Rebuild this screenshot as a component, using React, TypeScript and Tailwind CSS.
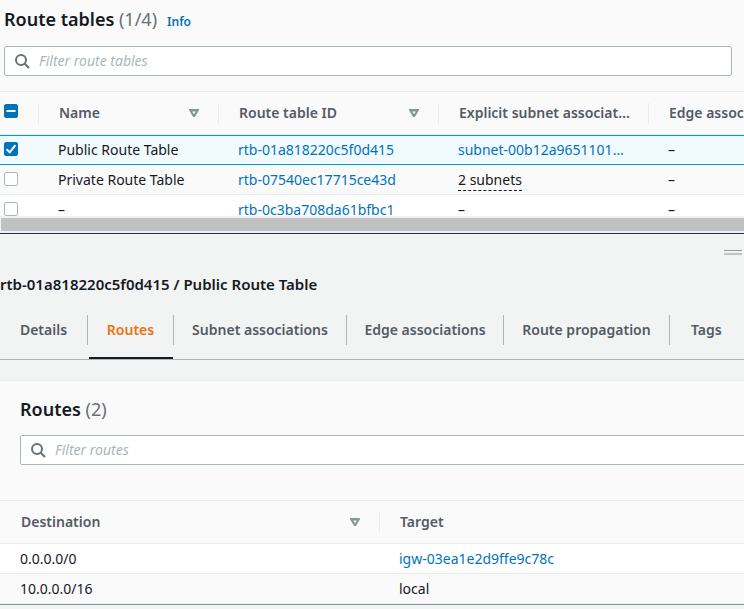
import { useEffect, useRef, useState, type ReactNode } from "react";

function SearchIcon() {
  return (
    <svg className="size-4 shrink-0 text-[#687078]" viewBox="0 0 16 16" fill="none" stroke="currentColor" strokeWidth="2" aria-hidden="true">
      <circle cx="7" cy="7" r="5" />
      <path d="M15 15l-4.5-4.5" />
    </svg>
  );
}

function SortIcon() {
  return (
    <svg className="h-2 w-2.5 shrink-0 text-[#879596]" viewBox="0 0 10 8" fill="currentColor" aria-hidden="true">
      <path fillRule="evenodd" d="M0 0h10v1.2L5.8 8H4.2L0 1.2zM3.2 2.4L5 5.3l1.8-2.9z" />
    </svg>
  );
}

function SearchBox({ label }: { label: string }) {
  return (
    <label className="flex h-[30px] items-center gap-[9px] rounded-xs border border-[#aab7b8] bg-white px-[9px]">
      <SearchIcon />
      <input
        type="search"
        aria-label={label}
        placeholder={label}
        className="min-w-0 flex-1 bg-transparent text-sm/5 text-[#16191f] outline-none placeholder:text-[#aab7b8] placeholder:italic"
      />
    </label>
  );
}

type CheckboxProps = {
  label: string;
  checked: boolean;
  mixed?: boolean;
  onChange: () => void;
};

function Checkbox({ label, checked, mixed = false, onChange }: CheckboxProps) {
  const ref = useRef<HTMLInputElement>(null);
  useEffect(() => {
    if (ref.current) ref.current.indeterminate = mixed;
  }, [mixed]);
  return (
    <span className="grid size-3.5">
      <input
        ref={ref}
        type="checkbox"
        aria-label={label}
        checked={checked}
        onChange={onChange}
        className="col-start-1 row-start-1 size-3.5 appearance-none rounded-xs border border-[#aab7b8] bg-white checked:border-[#0073bb] checked:bg-[#0073bb] indeterminate:border-[#0073bb] indeterminate:bg-[#0073bb]"
      />
      <svg className="pointer-events-none col-start-1 row-start-1 size-3.5" viewBox="0 0 14 14" fill="none" stroke="#fff" strokeWidth="2" aria-hidden="true">
        {mixed ? <path d="M2.5 7h9" /> : checked ? <path d="M2.5 7.2l3.3 3.1 5.6-7.2" /> : null}
      </svg>
    </span>
  );
}

type HeadCellProps = {
  children: ReactNode;
  sortable?: boolean;
  inset?: boolean;
};

function HeadCell({ children, sortable = false, inset = false }: HeadCellProps) {
  return (
    <th scope="col" className="group h-11 border-y border-[#eaeded] p-0 text-left font-semibold text-[#545b64]">
      <div
        className={`flex h-[21px] items-center justify-between border-r border-[#eaeded] group-last:border-r-0 ${inset ? "pl-[21px]" : "pl-5"} ${sortable ? "pr-[19px]" : "pr-3"}`}
      >
        <span className="truncate">{children}</span>
        {sortable && <SortIcon />}
      </div>
    </th>
  );
}

const routeTables = [
  { name: "Public Route Table", id: "rtb-01a818220c5f0d415", subnet: "subnet-00b12a9651101…", kind: "link" },
  { name: "Private Route Table", id: "rtb-07540ec17715ce43d", subnet: "2 subnets", kind: "popover" },
  { name: "–", id: "rtb-0c3ba708da61bfbc1", subnet: "–", kind: "text" },
];

const tabs = ["Details", "Routes", "Subnet associations", "Edge associations", "Route propagation", "Tags"];

const routes = [
  { destination: "0.0.0.0/0", target: "igw-03ea1e2d9ffe9c78c", link: true },
  { destination: "10.0.0.0/16", target: "local", link: false },
];

export default function App() {
  const [selected, setSelected] = useState(0);
  const [tab, setTab] = useState("Routes");

  return (
    <main className="min-h-screen overflow-hidden bg-[#f2f3f3] font-['Noto_Sans','Open_Sans',sans-serif] text-sm/5 text-[#16191f]">
      <section className="bg-[#fafafa]">
        <header className="flex h-[46px] items-baseline gap-2.5 pt-[7px] pl-1">
          <h1 className="text-lg/6 font-semibold">
            Route tables <span className="font-normal text-[#687078]">(1/4)</span>
          </h1>
          <a href="#info" className="text-xs font-semibold text-[#0073bb]">Info</a>
        </header>
        <div className="pr-3 pb-[15px] pl-1">
          <SearchBox label="Filter route tables" />
        </div>

        <div className="h-[125px] overflow-hidden">
          <table className="w-[869px] table-fixed border-separate border-spacing-0">
            <colgroup>
              <col className="w-[39px]" />
              <col className="w-[180px]" />
              <col className="w-[220px]" />
              <col className="w-[210px]" />
              <col />
            </colgroup>
            <thead>
              <tr>
                <th scope="col" className="h-11 border-y border-[#eaeded] p-0">
                  <div className="flex h-[21px] border-r border-[#eaeded] pt-px pl-1">
                    <Checkbox label="Select all route tables" checked={false} mixed={selected >= 0} onChange={() => setSelected(-1)} />
                  </div>
                </th>
                <HeadCell sortable>Name</HeadCell>
                <HeadCell sortable>Route table ID</HeadCell>
                <HeadCell>Explicit subnet associat…</HeadCell>
                <HeadCell>Edge associations</HeadCell>
              </tr>
            </thead>
            <tbody>
              {routeTables.map((row, i) => (
                <tr
                  key={row.id}
                  className={
                    i === selected
                      ? "bg-[#f1faff] [&>td]:border-y [&>td]:border-[#00a1c9]"
                      : "bg-white even:bg-[#fafafa] [&>td]:border-b [&>td]:border-[#eaeded]"
                  }
                >
                  <td className="h-[30px] p-0 pb-0.5 pl-1">
                    <Checkbox label={`Select ${row.id}`} checked={i === selected} onChange={() => setSelected(i === selected ? -1 : i)} />
                  </td>
                  <td className="p-0 pl-[19px]">{row.name}</td>
                  <td className="p-0 pl-[19px]">
                    <a href="#table" className="text-[#0073bb]">{row.id}</a>
                  </td>
                  <td className="p-0 pl-[19px] whitespace-nowrap">
                    {row.kind === "link" && <a href="#subnet" className="text-[#0073bb]">{row.subnet}</a>}
                    {row.kind === "popover" && (
                      <button type="button" className="border-b border-dashed border-[#16191f] pt-px">{row.subnet}</button>
                    )}
                    {row.kind === "text" && row.subnet}
                  </td>
                  <td className="p-0 pl-[19px]">–</td>
                </tr>
              ))}
            </tbody>
          </table>
        </div>
        <div className="bg-[#f1f1f1] pt-0.5 pb-0.5 pl-px">
          <div className="h-[13px] bg-[#c1c1c1]" />
        </div>
      </section>

      <section className="border-t border-[#232f3e]">
        <div className="flex justify-end pt-4 pr-0.5">
          <button type="button" aria-label="Resize panel" className="flex h-[5px] w-[18px] flex-col justify-between">
            <span className="h-px w-full bg-[#959b9b]" />
            <span className="h-0.5 w-full bg-[#c3c5c5]" />
          </button>
        </div>
        <h2 className="pt-[19px] text-[15px]/5 font-semibold">rtb-01a818220c5f0d415 / Public Route Table</h2>

        <div role="tablist" className="mt-[21px] grid h-[45px] grid-cols-[88px_86px_173px_157px_166px_auto] border-b border-[#aab7b8]">
          {tabs.map((name) => (
            <button
              key={name}
              type="button"
              role="tab"
              aria-selected={name === tab}
              onClick={() => setTab(name)}
              className="group flex flex-col justify-between font-semibold whitespace-nowrap text-[#545b64] aria-selected:text-[#ec7211]"
            >
              <span className="flex h-[30px] w-full items-center justify-center border-r border-[#aab7b8] group-last:justify-start group-last:border-r-0 group-last:pl-[21px]">
                {name}
              </span>
              <span className="ml-px h-0.5 w-[84px] group-aria-selected:bg-[#16191f]" />
            </button>
          ))}
        </div>

        <section className="mt-5 border-t border-[#eaeded] bg-[#fafafa]">
          <h2 className="h-[54px] pt-4 pl-5 text-lg/6 font-semibold">
            Routes <span className="font-normal text-[#687078]">(2)</span>
          </h2>
          <div className="-mr-1 pb-[35px] pl-5">
            <SearchBox label="Filter routes" />
          </div>
          <table className="w-full table-fixed border-separate border-spacing-0 border-b border-[#879596]">
            <colgroup>
              <col className="w-[380px]" />
              <col />
            </colgroup>
            <thead>
              <tr>
                <HeadCell sortable inset>Destination</HeadCell>
                <HeadCell>Target</HeadCell>
              </tr>
            </thead>
            <tbody>
              {routes.map((route) => (
                <tr key={route.destination} className="bg-white even:bg-[#fafafa] [&>td]:border-b [&>td]:border-[#eaeded]">
                  <td className="h-[30px] p-0 pl-5">{route.destination}</td>
                  <td className="p-0 pl-[19px]">
                    {route.link ? <a href="#target" className="text-[#0073bb]">{route.target}</a> : route.target}
                  </td>
                </tr>
              ))}
            </tbody>
          </table>
        </section>
      </section>
    </main>
  );
}
